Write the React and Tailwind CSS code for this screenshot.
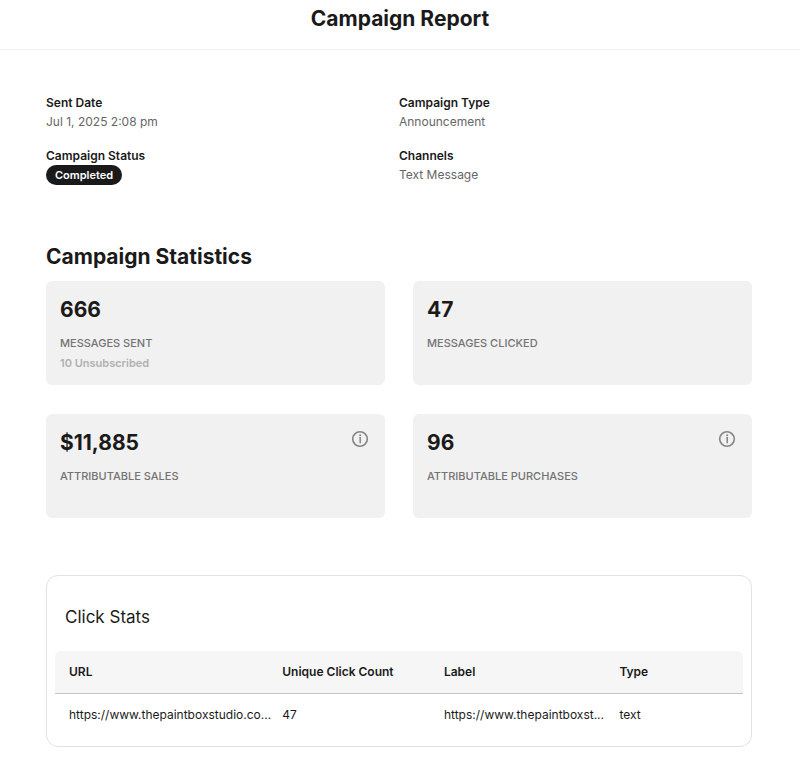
import React from "react";

const details = [
  { label: "Sent Date", value: "Jul 1, 2025 2:08 pm" },
  { label: "Campaign Type", value: "Announcement" },
  { label: "Campaign Status", value: "Completed", badge: true },
  { label: "Channels", value: "Text Message" },
];

const stats = [
  { value: "666", label: "MESSAGES SENT", note: "10 Unsubscribed" },
  { value: "47", label: "MESSAGES CLICKED" },
  { value: "$11,885", label: "ATTRIBUTABLE SALES", info: true },
  { value: "96", label: "ATTRIBUTABLE PURCHASES", info: true },
];

const clicks = [
  {
    url: "https://www.thepaintboxstudio.co...",
    count: 47,
    label: "https://www.thepaintboxst...",
    type: "text",
  },
];

function InfoIcon() {
  return (
    <svg width="18" height="18" viewBox="0 0 18 18" fill="none" aria-hidden="true">
      <circle cx="9" cy="9" r="7.3" stroke="#858585" strokeWidth="1.6" />
      <circle cx="9.2" cy="5.3" r="1" fill="#858585" />
      <path d="M8.3 7.8H9.2V13.2" stroke="#858585" strokeWidth="1.5" />
    </svg>
  );
}

function Detail({ label, value, badge }) {
  return (
    <div className="h-[37px]">
      <dt className="text-[12px] leading-[18px] font-semibold">{label}</dt>
      <dd className="text-[12px] leading-5 text-[#666666]">
        {badge ? (
          <span className="inline-block rounded-full bg-[#1a1a1a] px-[9px] text-[11px] leading-5 font-semibold text-white">
            {value}
          </span>
        ) : (
          value
        )}
      </dd>
    </div>
  );
}

function StatCard({ value, label, note, info }) {
  return (
    <div className="flex items-start justify-between rounded-md bg-[#f1f1f1] px-3.5 pt-4 pb-3.5">
      <div className="min-h-[74px]">
        <p className="text-[21px] leading-[26px] font-bold">{value}</p>
        <p className="mt-3 text-[11px] leading-4 font-medium text-[#737373]">{label}</p>
        {note && <p className="mt-1 text-[11px] leading-4 font-semibold text-[#b0b0b0]">{note}</p>}
      </div>
      {info && (
        <button type="button" aria-label={`About ${label.toLowerCase()}`} className="mr-0.5">
          <InfoIcon />
        </button>
      )}
    </div>
  );
}

function App() {
  return (
    <div className="bg-white font-['Inter',sans-serif] text-[#1a1a1a]">
      <header className="border-b border-[#f2f2f2] pt-[5px] pb-4 text-center">
        <h1 className="text-[21px] leading-7 font-bold">Campaign Report</h1>
      </header>

      <main className="pt-11 pr-12 pb-4 pl-[46px]">
        <dl className="grid grid-cols-2 gap-y-4">
          {details.map((item) => (
            <Detail key={item.label} {...item} />
          ))}
        </dl>

        <section className="mt-[59px]">
          <h2 className="text-[21px] leading-7 font-bold">Campaign Statistics</h2>
          <div className="mt-2.5 grid grid-cols-2 gap-x-7 gap-y-[29px]">
            {stats.map((item) => (
              <StatCard key={item.label} {...item} />
            ))}
          </div>
        </section>

        <section className="mt-[57px] rounded-xl border border-[#e2e2e2] px-2 pb-2.5">
          <h2 className="mt-7 mb-[21px] ml-2.5 text-[17px] leading-[26px]">Click Stats</h2>
          <table className="w-full table-fixed border-separate border-spacing-0 text-left text-[12px] leading-[18px]">
            <thead>
              <tr>
                <th className="w-[31%] rounded-tl-md border-b border-[#c4c4c4] bg-[#f6f6f6] py-3 pl-3.5 font-semibold">URL</th>
                <th className="w-[23.5%] border-b border-[#c4c4c4] bg-[#f6f6f6] py-3 pl-3.5 font-semibold">Unique Click Count</th>
                <th className="w-[25.5%] border-b border-[#c4c4c4] bg-[#f6f6f6] py-3 pl-3.5 font-semibold">Label</th>
                <th className="w-[20%] rounded-tr-md border-b border-[#c4c4c4] bg-[#f6f6f6] py-3 pl-3.5 font-semibold">Type</th>
              </tr>
            </thead>
            <tbody>
              {clicks.map((row) => (
                <tr key={row.url}>
                  <td className="py-3 pl-3.5 whitespace-nowrap">{row.url}</td>
                  <td className="py-3 pl-3.5">{row.count}</td>
                  <td className="py-3 pl-3.5 whitespace-nowrap">{row.label}</td>
                  <td className="py-3 pl-3.5">{row.type}</td>
                </tr>
              ))}
            </tbody>
          </table>
        </section>
      </main>
    </div>
  );
}

export default App;
